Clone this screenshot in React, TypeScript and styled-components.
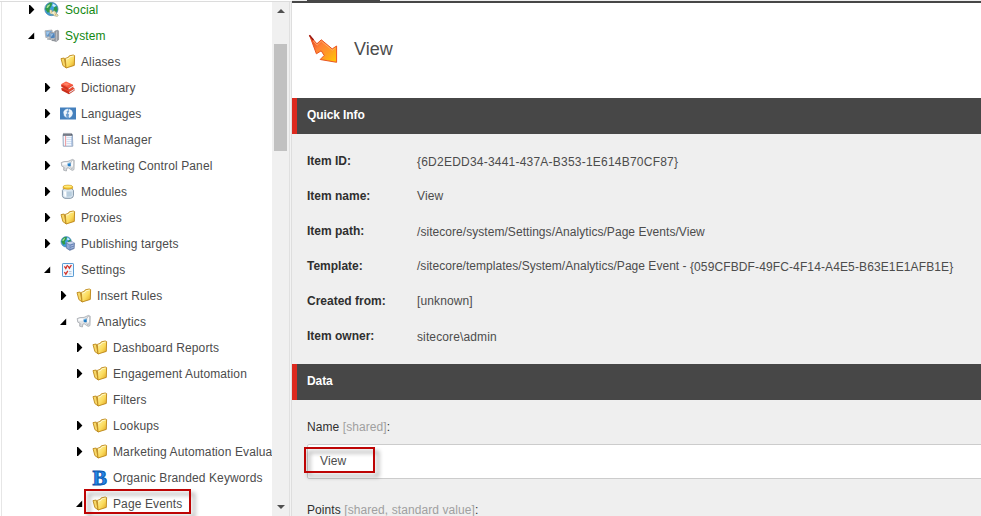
import React from "react";
import styled, { createGlobalStyle } from "styled-components";

const GlobalStyle = createGlobalStyle`
  *, *::before, *::after { box-sizing: border-box; }
  html, body { margin: 0; padding: 0; overflow: hidden; }
  body { font: 12px/16px "Liberation Sans", Arial, sans-serif; color: #4c4c4c; background: #fff; }
`;

const Page = styled.div`
  display: flex;
  width: 100vw;
  height: 100vh;
  overflow: hidden;
`;

const Sidebar = styled.aside`
  display: flex;
  flex: none;
  width: 292px;
  height: 100%;
  border-top: 1px solid #dcdcdc;
  margin-top: 1px;
`;

const Tree = styled.ul`
  flex: none;
  width: 272px;
  margin: 0;
  padding: 0;
  list-style: none;
  overflow: hidden;
  box-shadow: inset 1px 0 #fff, inset 2px 0 #e6e6e6;
`;

const TreeRow = styled.li<{ $level: number; $first: boolean }>`
  position: relative;
  display: flex;
  align-items: center;
  height: 26px;
  margin-top: ${(p) => (p.$first ? "-5px" : "0")};
  padding-left: ${(p) => 26 + p.$level * 16}px;
  white-space: nowrap;
`;

const Toggle = styled.span`
  flex: none;
  display: flex;
  width: 18px;
  height: 16px;
  svg { display: block; }
`;

const IconBox = styled.span`
  flex: none;
  display: flex;
  width: 16px;
  height: 16px;
  margin-right: 5px;
  svg { display: block; overflow: visible; }
`;

const NodeLabel = styled.span<{ $green?: boolean }>`
  color: ${(p) => (p.$green ? "#128812" : "#4c4c4c")};
  letter-spacing: 0.12px;
`;

const Scrollbar = styled.div`
  flex: none;
  display: flex;
  flex-direction: column;
  align-items: center;
  width: 17px;
  height: 513px;
  background: #f0f0f0;
  box-shadow: 0 2px #f0f0f0;
`;

const ScrollButton = styled.span`
  display: flex;
  flex: none;
  align-items: center;
  justify-content: center;
  width: 17px;
  height: 17px;
`;

const Thumb = styled.div`
  width: 13px;
  height: 107px;
  margin-top: 25px;
  margin-bottom: auto;
  background: #c1c1c1;
`;

const Splitter = styled.div`
  flex: none;
  width: 3px;
  background: #f3f3f3;
  border-left: 1px solid #e0e0e0;
  border-right: 1px solid #dedede;
`;

const Content = styled.main`
  flex: 1;
  min-width: 0;
  overflow: hidden;
  background: #efefef;
`;

const TabEdge = styled.div`
  height: 3px;
  border-bottom: 2px solid #474747;
  background: linear-gradient(#474747, #474747) 15px 0 / 73px 1px no-repeat #efefef;
`;

const TitleBar = styled.header`
  display: flex;
  height: 95px;
  padding: 31px 0 0 16px;
  background: #fff;
`;

const Title = styled.h1`
  margin: 3px 0 0 14px;
  font-size: 18px;
  line-height: 24px;
  font-weight: 400;
  color: #4c4c4c;
`;

const SectionHeader = styled.h2`
  height: 36px;
  margin: 0;
  padding: 9px 0 0 10px;
  border-left: 5px solid #dc291e;
  background: #474747;
  color: #fff;
  font-size: 12px;
  line-height: 16px;
  font-weight: 700;
  letter-spacing: -0.1px;
`;

const InfoGrid = styled.dl`
  display: grid;
  grid-template-columns: 110px 1fr;
  grid-template-rows: repeat(6, 35px);
  height: 230px;
  margin: 0;
  padding: 19px 0 0 15px;
`;

const Term = styled.dt`
  font-weight: 700;
  color: #2f2f2f;
`;

const Value = styled.dd<{ $drop?: number; $spacing?: number }>`
  margin: 0;
  padding-top: ${(p) => p.$drop ?? 0}px;
  letter-spacing: ${(p) => p.$spacing ?? 0.12}px;
  white-space: nowrap;
`;

const Guid = styled.span`
  display: inline-block;
  padding-top: 1px;
  vertical-align: top;
  letter-spacing: 0.12px;
`;

const Fields = styled.section`
  padding: 19px 0 0 15px;
`;

const FieldLabel = styled.div`
  color: #2f2f2f;
  white-space: nowrap;
  letter-spacing: 0.08px;
  em { font-style: normal; color: #a0a0a0; }
`;

const FieldInput = styled.div`
  position: relative;
  height: 35px;
  margin: 9px -10px 23px 0;
  padding: 8px 12px;
  border: 1px solid #ccc;
  border-radius: 2px;
  background: #fff;
  letter-spacing: 0.15px;
`;

const Highlight = styled.span<{ $x: number; $y: number; $w: number; $h: number }>`
  position: absolute;
  left: ${(p) => p.$x}px;
  top: ${(p) => p.$y}px;
  width: ${(p) => p.$w}px;
  height: ${(p) => p.$h}px;
  border: 2px solid #be0404;
  filter: drop-shadow(4px 4px 2px rgba(0, 0, 0, 0.38));
  pointer-events: none;
`;

type IconName =
  | "social" | "computers" | "folder" | "books" | "flag" | "notepad"
  | "megaphone" | "jar" | "publish" | "checklist" | "letterB";

function Globe({ cx = 7, cy = 7, r = 6.5 }: { cx?: number; cy?: number; r?: number }) {
  return (
    <g transform={`translate(${cx} ${cy}) scale(${r / 7})`}>
      <circle r="7" fill="#3f9fdd" stroke="#3f7da8" strokeWidth=".8" />
      <path d="M-5-4-2-6.5 1-6.5 0-3-2 0-1 3-4 4-6.6 0Z" fill="#2f9a4a" />
      <path d="M3-2 6-3 6.6 1 4 5 2 2Z" fill="#2f9a4a" />
      <path d="M-4.6-3.4-2-5-1.5-4-3.8-1-5.2-1Z" fill="#a6dd94" />
      <path d="M1.6-5.8 5-3.6 3-2 1-3.2Z" fill="#c9ecfc" />
    </g>
  );
}

function NodeIcon({ name }: { name: IconName }) {
  switch (name) {
    case "folder":
      return (
        <svg width="16" height="16" viewBox="0 0 16 16">
          <defs>
            <linearGradient id="folderFront" x1="0" y1="0" x2="1" y2="1">
              <stop offset="0" stopColor="#fff4ae" />
              <stop offset=".55" stopColor="#fbdc5e" />
              <stop offset="1" stopColor="#e0a41f" />
            </linearGradient>
          </defs>
          <path d="M1 4.6 4.2 4 6.2 13.9 2.9 11.6Z" fill="#f7d768" stroke="#bd8a1c" strokeWidth=".9" strokeLinejoin="round" />
          <path d="M5.3 4.4 8.3 3.4 9.2 1.9 13.2 1 14.6 1.6 14.3 11.4 6 14Z" fill="url(#folderFront)" stroke="#bb8516" strokeWidth=".9" strokeLinejoin="round" />
          <path d="M6.2 5.2 9 4.3 10 2.8 13.6 2" fill="none" stroke="#fffbd6" strokeWidth=".8" />
        </svg>
      );
    case "books":
      return (
        <svg width="16" height="16" viewBox="0 0 16 16">
          <path d="M1.2 8.2 1.8 10.6 9 14.2 14.6 10.4 14.3 8.2 8 7Z" fill="#c8301c" />
          <path d="M9.2 11.8 14.2 8.8V10L9.2 13.3Z" fill="#e3dfe4" />
          <path d="M1.2 8 9 11.8 14.4 8.4 12 6Z" fill="#ee4a30" />
          <path d="M1 4.4 1.4 6.8 8.6 10.4 13.2 7 13 5Z" fill="#cf3520" />
          <path d="M8.6 8.2 13 5.4V6.8L8.7 9.7Z" fill="#f2dcd6" />
          <path d="M1 4.2 6 1.4 13.2 4.8 8.4 8Z" fill="#fa5a40" />
          <path d="M3 4.1 6 2.5 9.8 4.2 6.8 5.8Z" fill="#ff8468" />
        </svg>
      );
    case "flag":
      return (
        <svg width="16" height="16" viewBox="0 0 16 16">
          <rect x="0" y="1.5" width="16" height="12" fill="#4480bd" />
          <circle cx="8" cy="7.5" r="4.9" fill="#6f9fd0" />
          <path d="M3.4 6 5 3.8 7.8 2.8 8 4.2 6.4 5.6 7.4 7 5.8 8.4 6.6 11.6 4.4 10ZM9 3 11.8 4.4 12.8 7.2 11.8 9.8 9.6 12 8.6 10.4 9.2 8.6 7.8 7.2 9.4 5.4 8.6 4.4Z" fill="#eef5fc" />
        </svg>
      );
    case "notepad":
      return (
        <svg width="16" height="16" viewBox="0 0 16 16">
          <path d="M3 2.5H12.4L12.8 14.2H3.3Z" fill="#f3f8ff" stroke="#7f93ad" strokeWidth=".8" />
          <path d="M3 1.4H12L12.4 3.8H3Z" fill="#5d6370" />
          <path d="M4 .8V3M6 .8V3M8 .8V3M10 .8V3" stroke="#a3a9b3" strokeWidth=".7" />
          <path d="M6.5 5.5H12M6.5 7.5H12M6.5 9.5H12M6.5 11.5H12" stroke="#c3d5ec" strokeWidth=".7" />
          <path d="M5.6 4V14" stroke="#ee7d7d" strokeWidth=".8" />
          <path d="M11.8 4.5V13.8" stroke="#9cb6dd" strokeWidth=".9" />
        </svg>
      );
    case "megaphone":
      return (
        <svg width="16" height="16" viewBox="0 0 16 16">
          <path d="M1.2 4.6 3.8 3.6 8 3.4 12.4 1.4 14.2 2.2 14 11.6 12.2 12.4 8.2 9.8 6.9 10 6.4 13 3.6 12.2 3.8 9 1.8 8.2Z" fill="#e1e4e7" stroke="#999da3" strokeWidth=".7" strokeLinejoin="round" />
          <path d="M2.2 5.2 4.8 4.4 7.6 4.4 7.4 6.4 2.4 6.8Z" fill="#fbfcfd" />
          <path d="M12.2 2.2Q9 6.4 11.9 11.4 14.4 8 13.6 2.6Z" fill="#fafbfc" stroke="#a3a7ac" strokeWidth=".6" />
          <path d="M7.6 5.4 10.4 4.4 10.8 7.8 9 8.6 7.6 7.6Z" fill="#1f7cc6" />
          <path d="M8.2 5.7 9.8 5.2" stroke="#93d3f8" strokeWidth=".8" />
          <path d="M4.6 9.4 5 11.8" stroke="#b6babf" strokeWidth=".8" />
        </svg>
      );
    case "jar":
      return (
        <svg width="16" height="16" viewBox="0 0 16 16">
          <path d="M4 4.5 2.4 6.4V11.6Q2.6 14 5 14.3H10.6Q13.2 14 13.4 11.6V6.4L11.8 4.5Z" fill="#dce8f2" stroke="#73889c" strokeWidth=".9" />
          <path d="M4 7.4H6V12.6H4.6Z" fill="#fff" />
          <path d="M6.8 7.4H11.8V12Q11 13 6.8 12.8Z" fill="#b9cede" />
          <path d="M3.2 2.6Q3.6 1.1 7.9 1.1 12.2 1.1 12.6 2.6V4.6Q7.9 6 3.2 4.6Z" fill="#f3c02c" stroke="#c28f14" strokeWidth=".6" />
          <ellipse cx="7.9" cy="2.5" rx="4" ry="1" fill="#ffec7c" />
        </svg>
      );
    case "social":
      return (
        <svg width="16" height="16" viewBox="0 0 16 16">
          <Globe cx={7.4} cy={7} r={6.6} />
          <path d="M5.6 8.4Q6.8 7 8 8.4L8.4 10 10 8.6 12.3 10.4 12.2 11.6 14.2 13 13.4 14.4 10.6 13.8 9 12.3 6.1 11.8Z" fill="#f6f1d2" stroke="#8f936d" strokeWidth=".6" />
          <path d="M7 10H8M10.5 11H11.5M10.8 12.8H12.4" stroke="#cda449" />
        </svg>
      );
    case "computers":
      return (
        <svg width="16" height="16" viewBox="0 0 16 16">
          <path d="M10.8 3 14 2.2 14.6 3V11.8L12.2 13.6 10.4 13Z" fill="#9a9ea4" stroke="#74787e" strokeWidth=".5" />
          <path d="M12.4 3.6V13" stroke="#c9ccd0" strokeWidth=".8" />
          <path d="M1 2.8 8 2 8.8 8.6 1.8 9.6Z" fill="#c6cbd1" stroke="#8e949b" strokeWidth=".6" />
          <path d="M1.9 3.5 7.4 2.9 8 7.9 2.5 8.7Z" fill="#5d92c8" />
          <path d="M2.1 3.9 6.8 3.3 3 7.4Z" fill="#a0c7ea" />
          <path d="M5.4 4.8 11.2 4.2 11.8 10.8 6 11.4Z" fill="#c2c7ce" stroke="#858b93" strokeWidth=".6" />
          <path d="M6.2 5.6 10.5 5.1 10.9 9.8 6.7 10.3Z" fill="#4f83bb" />
          <path d="M6.4 5.9 9.8 5.5 7 9Z" fill="#90b9e0" />
          <path d="M3.4 10.2 6.4 10.6V11.8L3 11.4ZM8 11.6H10.4L11 13.2 7.4 13Z" fill="#8f9499" />
        </svg>
      );
    case "publish":
      return (
        <svg width="16" height="16" viewBox="0 0 16 16">
          <Globe cx={6.2} cy={5.8} r={5.2} />
          <path d="M6.2 6.6 11.4 5.4 14.6 7 14.2 12.6 9.8 14.4 6.4 12.2Z" fill="#6a85b8" stroke="#4c638e" strokeWidth=".5" />
          <path d="M6.2 6.6 11.4 5.4 14.6 7 9.8 8.6Z" fill="#c5d3ea" />
          <path d="M6.6 7.4 9.6 9.2V13.6L6.8 11.8Z" fill="#90a9d6" />
          <path d="M10.4 10.2 13.8 9M10.4 12.4 13.8 11.2" stroke="#c6d5f2" strokeWidth=".7" />
        </svg>
      );
    case "checklist":
      return (
        <svg width="16" height="16" viewBox="0 0 16 16">
          <rect x="2.5" y="1.5" width="11" height="13" rx=".6" fill="#eff7ff" stroke="#5a9cd4" />
          <path d="M4.4 4.4 5.8 6.4 7.6 3M4.4 10 5.8 12.2 7.8 8.8M8.2 4.2 9.4 6.2 11.4 3" fill="none" stroke="#d4342a" strokeWidth="1.3" />
          <path d="M9 11.8H11.5M9 9.6H11.5" stroke="#9fb2c6" strokeWidth=".8" />
        </svg>
      );
    case "letterB":
      return (
        <svg width="16" height="16" viewBox="0 0 16 16">
          <text x=".4" y="14.6" fontFamily="Liberation Serif, serif" fontSize="21" fontWeight="700" textLength="14.4" lengthAdjust="spacingAndGlyphs" fill="#2388e6" stroke="#0d55ad" strokeWidth=".9">B</text>
        </svg>
      );
  }
}

type NodeData = {
  label: string;
  icon: IconName;
  level: number;
  state?: "open" | "closed";
  green?: boolean;
  marked?: boolean;
};

const nodes: NodeData[] = [
  { label: "Social", icon: "social", level: 0, state: "closed", green: true },
  { label: "System", icon: "computers", level: 0, state: "open", green: true },
  { label: "Aliases", icon: "folder", level: 1 },
  { label: "Dictionary", icon: "books", level: 1, state: "closed" },
  { label: "Languages", icon: "flag", level: 1, state: "closed" },
  { label: "List Manager", icon: "notepad", level: 1, state: "closed" },
  { label: "Marketing Control Panel", icon: "megaphone", level: 1, state: "closed" },
  { label: "Modules", icon: "jar", level: 1, state: "closed" },
  { label: "Proxies", icon: "folder", level: 1, state: "closed" },
  { label: "Publishing targets", icon: "publish", level: 1, state: "closed" },
  { label: "Settings", icon: "checklist", level: 1, state: "open" },
  { label: "Insert Rules", icon: "folder", level: 2, state: "closed" },
  { label: "Analytics", icon: "megaphone", level: 2, state: "open" },
  { label: "Dashboard Reports", icon: "folder", level: 3, state: "closed" },
  { label: "Engagement Automation", icon: "folder", level: 3, state: "closed" },
  { label: "Filters", icon: "folder", level: 3 },
  { label: "Lookups", icon: "folder", level: 3, state: "closed" },
  { label: "Marketing Automation Evalua", icon: "folder", level: 3, state: "closed" },
  { label: "Organic Branded Keywords", icon: "letterB", level: 3 },
  { label: "Page Events", icon: "folder", level: 3, state: "open", marked: true },
];

export default function App() {
  return (
    <>
      <GlobalStyle />
      <Page>
        <Sidebar>
          <Tree>
            {nodes.map((n, i) => (
              <TreeRow key={n.label} $level={n.level} $first={i === 0}>
                <Toggle>
                  {n.state && (
                    <svg width="12" height="16" viewBox="0 0 12 16">
                      <path d={n.state === "open" ? "M8.2 4.6V11H2Z" : "M3 3 4 3 8.4 7.5 4 12H3Z"} fill="#000" />
                    </svg>
                  )}
                </Toggle>
                <IconBox><NodeIcon name={n.icon} /></IconBox>
                <NodeLabel $green={n.green}>{n.label}</NodeLabel>
                {n.marked && <Highlight $x={84} $y={-2} $w={107} $h={25} />}
              </TreeRow>
            ))}
          </Tree>
          <Scrollbar>
            <ScrollButton>
              <svg width="8" height="4" viewBox="0 0 8 4"><path d="M4 0 8 4H0Z" fill="#505050" /></svg>
            </ScrollButton>
            <Thumb />
            <ScrollButton>
              <svg width="8" height="4" viewBox="0 0 8 4"><path d="M0 0H8L4 4Z" fill="#505050" /></svg>
            </ScrollButton>
          </Scrollbar>
          <Splitter />
        </Sidebar>
        <Content>
          <TabEdge />
          <TitleBar>
            <svg width="32" height="32" viewBox="0 0 32 32">
              <defs>
                <linearGradient id="bolt" x1="0" y1="0" x2="1" y2="1">
                  <stop offset="0" stopColor="#e0301c" />
                  <stop offset=".4" stopColor="#ff8236" />
                  <stop offset=".65" stopColor="#ff9a24" />
                  <stop offset="1" stopColor="#ffca00" />
                </linearGradient>
              </defs>
              <path d="M1.6 1.4 8.9 9.8 13.3 5.8 24.2 14.9 28.6 12V28.3L12.2 25.5 16.2 21.4 13.2 16.8 8.4 19.8Z" fill="url(#bolt)" stroke="#ea5420" strokeWidth="1" strokeLinejoin="round" />
              <path d="M5 6.8 9 11.2 13.3 7.2 24.2 16.2 27.4 14.2" fill="none" stroke="#ffb070" strokeWidth=".8" />
              <path d="M1.4 1.2 5.4 6" stroke="#9c1a14" strokeWidth="1.5" />
            </svg>
            <Title>View</Title>
          </TitleBar>
          <SectionHeader>Quick Info</SectionHeader>
          <InfoGrid>
            <Term>Item ID:</Term>
            <Value $drop={1} $spacing={0.22}>{"{6D2EDD34-3441-437A-B353-1E614B70CF87}"}</Value>
            <Term>Item name:</Term>
            <Value>View</Value>
            <Term>Item path:</Term>
            <Value $drop={1} $spacing={0.05}>/sitecore/system/Settings/Analytics/Page Events/View</Value>
            <Term>Template:</Term>
            <Value $spacing={0.03}>
              /sitecore/templates/System/Analytics/Page Event - <Guid>{"{059CFBDF-49FC-4F14-A4E5-B63E1E1AFB1E}"}</Guid>
            </Value>
            <Term>Created from:</Term>
            <Value>[unknown]</Value>
            <Term>Item owner:</Term>
            <Value $drop={1}>sitecore\admin</Value>
          </InfoGrid>
          <SectionHeader>Data</SectionHeader>
          <Fields>
            <FieldLabel>Name <em>[shared]</em>:</FieldLabel>
            <FieldInput>
              View
              <Highlight $x={-4} $y={2} $w={71} $h={26} />
            </FieldInput>
            <FieldLabel>Points <em>[shared, standard value]</em>:</FieldLabel>
          </Fields>
        </Content>
      </Page>
    </>
  );
}
